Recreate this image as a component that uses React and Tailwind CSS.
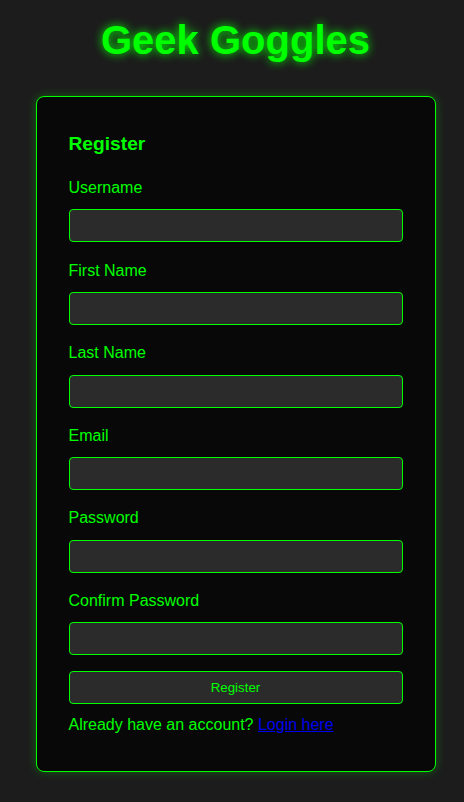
export default function App() {
  const fields = ['Username', 'First Name', 'Last Name', 'Email', 'Password', 'Confirm Password']

  return (
    <div
      className="min-h-[802px] bg-[#1c1c1c] flex flex-col items-center pl-[7px]"
      style={{ fontFamily: '"Liberation Sans", Arial, sans-serif' }}
    >
      <h1 className="mt-[17px] text-[40px] font-bold leading-[46px] text-[#00ff00] [text-shadow:0_0_10px_#00ff00]">
        Geek Goggles
      </h1>

      <div className="mt-[33px] w-[400px] bg-[#080808] border border-[#00ff00] rounded-[8px] px-[32px] pt-[36px] pb-[36px] shadow-[0_0_10px_rgba(0,255,0,0.3)]">
        <h2 className="text-[19.2px] font-bold leading-[22px] text-[#00ff00] mb-[24px]">Register</h2>

        <form onSubmit={(e) => e.preventDefault()}>
          {fields.map((label, i) => (
            <div key={label} className={i === fields.length - 1 ? 'mb-[16px]' : 'mb-[19.2px]'}>
              <label className="block text-[16px] leading-[18.4px] text-[#00ff00] mb-[12px]">{label}</label>
              <input
                type={label.includes('Password') ? 'password' : 'text'}
                className="block w-full h-[33px] px-2 bg-[#2b2b2b] border border-[#00ff00] rounded-[4px] text-[#00ff00] text-[13.33px] outline-none"
              />
            </div>
          ))}

          <button
            type="submit"
            className="block w-full h-[33px] bg-[#2b2b2b] border border-[#00ff00] rounded-[4px] text-[#00ff00] text-[13.33px]"
          >
            Register
          </button>
        </form>

        <p className="mt-[12px] text-[16px] leading-[18.4px] text-[#00ff00]">
          Already have an account?{' '}
          <a href="#" className="text-[#0000ee] underline">Login here</a>
        </p>
      </div>
    </div>
  )
}
